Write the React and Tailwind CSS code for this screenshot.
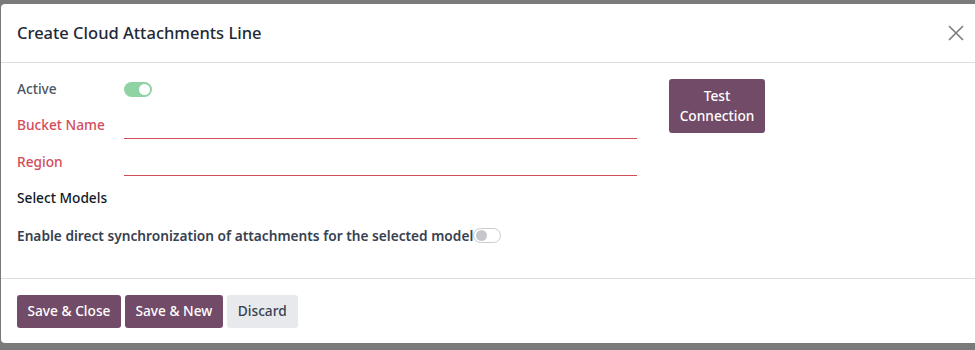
import React from 'react';

const Toggle = ({ on }) => (
    <span
        className={`inline-flex items-center w-[28px] h-[15px] rounded-full px-[2px] ${
            on ? 'bg-[#8fd3a4] justify-end' : 'bg-white border border-[#c9ccd1] justify-start'
        }`}
    >
        <span className={`w-[11px] h-[11px] rounded-full ${on ? 'bg-white' : 'bg-[#c5c7cb]'}`} />
    </span>
);

const Field = ({ label, required }) => (
    <div className="flex items-end h-[37px]">
        <label className={`w-[107px] pb-[3px] text-[13.7px] font-medium ${required ? 'text-[#d44c59]' : 'text-[#4b5563]'}`}>
            {label}
        </label>
        <div className="w-[513px] h-[24px] border-b border-[#d44c59]" />
    </div>
);

export default function App() {
    return (
        <div className="w-[975px] h-[350px] bg-[#7a7a7a] pt-[4px] pl-[1px] overflow-hidden" style={{ fontFamily: '"Noto Sans", Roboto, sans-serif' }}>
            <div className="bg-white h-[339px] rounded-l-[4px] flex flex-col">
                {/* header */}
                <div className="h-[59px] flex items-center justify-between pl-[16px] pr-[7px] border-b border-[#dcdde0]">
                    <h4 className="text-[16.5px] font-medium text-[#1f2937]">Create Cloud Attachments Line</h4>
                    <button className="w-[24px] h-[24px] flex items-center justify-center text-[#7c7c7c]">
                        <svg width="16" height="16" viewBox="0 0 16 16" stroke="currentColor" strokeWidth="1.6" fill="none">
                            <path d="M1 1 L15 15 M15 1 L1 15" />
                        </svg>
                    </button>
                </div>

                {/* body */}
                <div className="flex-1 pl-[16px] pt-[16px] border-b border-[#dcdde0]">
                    <div className="flex">
                        <div className="w-[620px]">
                            <div className="flex items-center h-[23px] pb-[3px]">
                                <label className="w-[107px] text-[13.7px] font-medium text-[#4b5563]">Active</label>
                                <Toggle on />
                            </div>
                            <Field label="Bucket Name" required />
                            <Field label="Region" required />
                        </div>
                        <div className="ml-[32px]">
                            <button className="w-[96px] h-[54px] rounded-[3px] bg-[#714b67] text-white text-[13.7px] font-medium leading-[20px]">
                                Test
                                <br />
                                Connection
                            </button>
                        </div>
                    </div>
                    <div className="mt-[12px] text-[13.7px] font-medium text-[#111827]">Select Models</div>
                    <div className="mt-[17px] flex items-center">
                        <span className="text-[13.7px] font-semibold text-[#374151]">
                            Enable direct synchronization of attachments for the selected model
                        </span>
                        <Toggle />
                    </div>
                </div>

                {/* footer */}
                <div className="h-[64px] flex items-start gap-[4px] pl-[16px] pt-[16px]">
                    <button className="h-[33px] px-[10.5px] rounded-[3px] bg-[#714b67] text-white text-[13.7px] font-medium">Save &amp; Close</button>
                    <button className="h-[33px] px-[10.5px] rounded-[3px] bg-[#714b67] text-white text-[13.7px] font-medium">Save &amp; New</button>
                    <button className="h-[33px] px-[11px] rounded-[3px] bg-[#e7e9ed] text-[#374151] text-[13.7px] font-medium">Discard</button>
                </div>
            </div>
        </div>
    );
}
